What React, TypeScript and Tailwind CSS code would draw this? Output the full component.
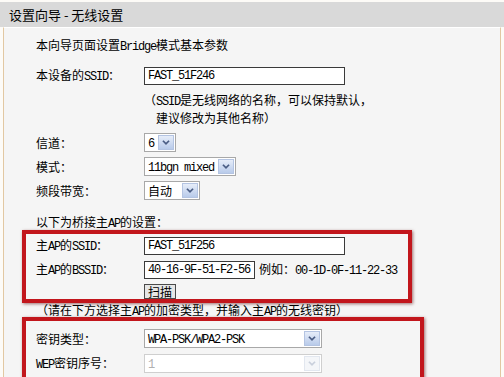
import React from "react";

const mono = "font-['Liberation_Mono',monospace] text-[12px] tracking-[-1.2px]";

function M({ children, className = "" }: { children: React.ReactNode; className?: string }) {
  return <span className={`${mono} ${className}`}>{children}</span>;
}

function Row({ label, children, className = "" }: { label: React.ReactNode; children?: React.ReactNode; className?: string }) {
  return (
    <div className={`flex items-center ${className}`}>
      <div className="w-[108px] shrink-0 whitespace-nowrap">{label}</div>
      {children}
    </div>
  );
}

function TextBox({ children }: { children: React.ReactNode }) {
  return (
    <div className="w-[201px] h-[18px] border border-[#3a3a3a] bg-white pl-[3px] flex items-center">
      {children}
    </div>
  );
}

function Arrow({ disabled }: { disabled?: boolean }) {
  return (
    <div
      className={
        disabled
          ? "w-[16px] h-[15px] border border-[#e2e7ef] bg-[#f4f6f9] flex items-center justify-center"
          : "w-[16px] h-[15px] border border-[#b4c4e2] bg-gradient-to-b from-[#e6edf9] to-[#b9cbea] flex items-center justify-center"
      }
    >
      <svg width="16" height="15" viewBox="0 0 16 15">
        <path
          d="M4.5 5.5 L8 9 L11.5 5.5"
          fill="none"
          stroke={disabled ? "#c9d0dc" : "#4a5d84"}
          strokeWidth="2"
        />
      </svg>
    </div>
  );
}

function Select({ w, children, disabled }: { w: string; children: React.ReactNode; disabled?: boolean }) {
  return (
    <div
      className={`${w} h-[19px] border ${
        disabled ? "border-[#cfcfcf]" : "border-[#a8a8a8]"
      } bg-white flex items-center justify-between pl-[3px] pr-[1px]`}
    >
      <div className={disabled ? "text-[#b0b0b0]" : ""}>{children}</div>
      <Arrow disabled={disabled} />
    </div>
  );
}

export default function App() {
  return (
    <div className="w-[504px] h-[377px] overflow-hidden bg-[#fdfbf7] font-['Noto_Sans_CJK_SC',sans-serif] text-[12px] leading-[16px] text-black">
      {/* title bar */}
      <div className="mt-[2px] h-[25px] bg-[#d9d9d9] pl-[9px] flex items-center text-[13px]">
        设置向导 - 无线设置
      </div>

      <div className="ml-[3px] w-[498px] h-[400px] border-l border-r border-[#e2c8a2] border-t border-t-white bg-[#f5f5f5] pl-[32px]">
        <div className="mt-[9px] h-[16px]">
          本向导页面设置<M>Bridge</M>模式基本参数
        </div>

        <Row className="mt-[14px]" label={<>本设备的<M>SSID</M>：</>}>
          <TextBox>
            <M>FAST_51F246</M>
          </TextBox>
        </Row>

        <div className="mt-[7px] ml-[108px]">
          <div>（<M>SSID</M>是无线网络的名称，可以保持默认，</div>
          <div className="pl-[12px]">建议修改为其他名称）</div>
        </div>

        <Row className="mt-[7px]" label="信道：">
          <Select w="w-[32px]">
            <M>6</M>
          </Select>
        </Row>
        <Row className="mt-[5px]" label="模式：">
          <Select w="w-[92px]">
            <M>11bgn mixed</M>
          </Select>
        </Row>
        <Row className="mt-[5px]" label="频段带宽：">
          <Select w="w-[56px]">自动</Select>
        </Row>

        <div className="mt-[14px] h-[16px]">
          以下为桥接主<M>AP</M>的设置：
        </div>

        {/* first highlight box */}
        <div className="-ml-[14px] w-[390px] h-[73px] border-4 border-[#c2161c] shadow-[1px_1px_3px_rgba(90,0,0,0.55)] pl-[10px] pt-[3px]">
          <Row label={<>主<M>AP</M>的<M>SSID</M>：</>}>
            <TextBox>
              <M>FAST_51F256</M>
            </TextBox>
          </Row>
          <Row className="mt-[6px]" label={<>主<M>AP</M>的<M>BSSID</M>：</>}>
            <div className="w-[111px] h-[18px] border border-[#3a3a3a] bg-white pl-[3px] flex items-center">
              <M>40-16-9F-51-F2-56</M>
            </div>
            <div className="ml-[4px] whitespace-nowrap">
              例如：<M>00-1D-0F-11-22-33</M>
            </div>
          </Row>
          <div className="mt-[5px] ml-[108px] w-[32px] h-[15px] border border-[#4a4a4a] bg-[#e6e6e6] flex items-center justify-center leading-[13px]">
            扫描
          </div>
        </div>

        <div className="h-[14px] leading-[14px] whitespace-nowrap">
          （请在下方选择主<M>AP</M>的加密类型，并输入主<M>AP</M>的无线密钥）
        </div>

        {/* second highlight box */}
        <div className="-ml-[14px] w-[402px] h-[100px] border-4 border-[#c2161c] shadow-[1px_1px_3px_rgba(90,0,0,0.55)] pl-[10px] pt-[8px]">
          <Row label="密钥类型：">
            <Select w="w-[178px]">
              <M>WPA-PSK/WPA2-PSK</M>
            </Select>
          </Row>
          <Row className="mt-[6px]" label={<><M>WEP</M>密钥序号：</>}>
            <Select w="w-[178px]" disabled>
              <M>1</M>
            </Select>
          </Row>
          <Row className="mt-[4px]" label="">
            <div className="w-[178px] h-[19px] border border-[#cfcfcf] bg-white" />
          </Row>
        </div>
      </div>
    </div>
  );
}
